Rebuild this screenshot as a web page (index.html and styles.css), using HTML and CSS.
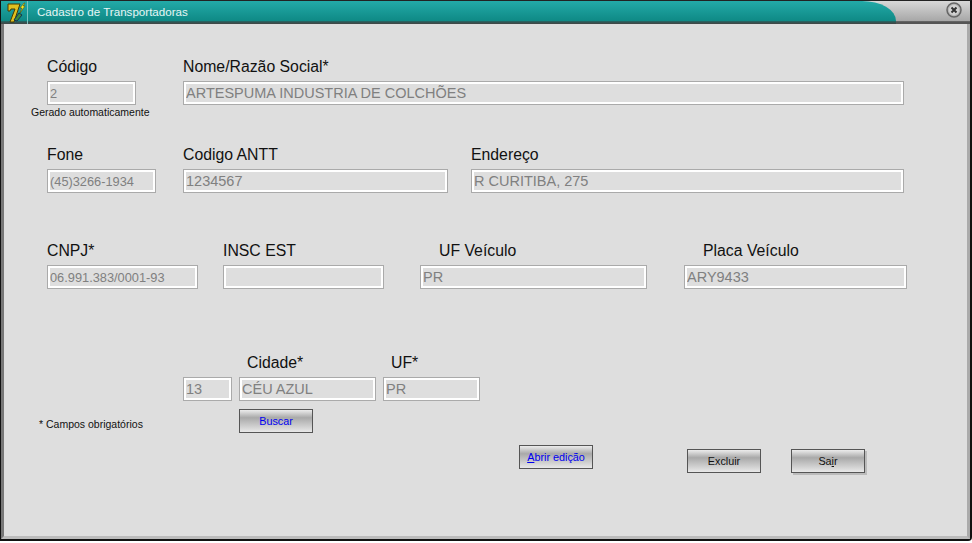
FILE: index.html
```html
<!DOCTYPE html>
<html lang="en">

<head>
    <meta charset="UTF-8">
    <meta name="viewport" content="width=device-width, initial-scale=1.0">
    <title>Cadastro de Transportadoras</title>
    <link rel="stylesheet" href="styles.css">
</head>

<body>
    <div class="window">
        <div class="titlebar">
            <div class="title-tab">
                <div class="app-icon">
                    <svg width="26" height="22" viewBox="0 0 26 22">
                        <path d="M7 3h12l-1 3-5 15H9l5-13h-4l-1 2H7z" fill="#e0c020" stroke="#4a3a00" stroke-width="1"/>
                        <path d="M13 19l5-7 3 2-5 6z" fill="#3c8a3c" stroke="#123456"/>
                        <path d="M23 2l-4 5h2l-2 5 5-7h-2l2-3z" fill="#f4e820" stroke="#554400" stroke-width=".5"/>
                    </svg>
                </div>
                <span class="title-text">Cadastro de Transportadoras</span>
            </div>
            <div class="close-btn">
                <svg width="16" height="16" viewBox="0 0 16 16">
                    <circle cx="8" cy="8" r="7" fill="#b8b8b8" stroke="#666" stroke-width="1.5"/>
                    <circle cx="8" cy="8" r="5" fill="#d4d4d4"/>
                    <path d="M5.5 5.5l5 5M10.5 5.5l-5 5" stroke="#333" stroke-width="2"/>
                </svg>
            </div>
        </div>

        <form class="content">
            <div class="row row-1">
                <div class="field w-codigo">
                    <label>Código</label>
                    <input type="text" value="2" class="small" disabled>
                    <span class="hint hint-auto">Gerado automaticamente</span>
                </div>
                <div class="field w-nome">
                    <label>Nome/Razão Social*</label>
                    <input type="text" value="ARTESPUMA INDUSTRIA DE COLCHÕES" disabled>
                </div>
            </div>

            <div class="row row-2">
                <div class="field w-fone">
                    <label>Fone</label>
                    <input type="text" value="(45)3266-1934" class="small" disabled>
                </div>
                <div class="field w-antt">
                    <label>Codigo ANTT</label>
                    <input type="text" value="1234567" disabled>
                </div>
                <div class="field w-endereco">
                    <label>Endereço</label>
                    <input type="text" value="R CURITIBA, 275" disabled>
                </div>
            </div>

            <div class="row row-3">
                <div class="field w-cnpj">
                    <label>CNPJ*</label>
                    <input type="text" value="06.991.383/0001-93" class="small" disabled>
                </div>
                <div class="field w-insc">
                    <label>INSC EST</label>
                    <input type="text" value="" disabled>
                </div>
                <div class="field w-ufv">
                    <label class="indent">UF Veículo</label>
                    <input type="text" value="PR" disabled>
                </div>
                <div class="field w-placa">
                    <label class="indent">Placa Veículo</label>
                    <input type="text" value="ARY9433" disabled>
                </div>
            </div>

            <div class="row row-4">
                <div class="field w-cod">
                    <input type="text" value="13" disabled>
                </div>
                <div class="field w-cidade">
                    <label class="indent-s">Cidade*</label>
                    <input type="text" value="CÉU AZUL" disabled>
                </div>
                <div class="field w-uf">
                    <label class="indent-s">UF*</label>
                    <input type="text" value="PR" disabled>
                </div>
            </div>

            <div class="row-search">
                <span class="hint hint-req">* Campos obrigatórios</span>
                <button type="button" class="btn btn-blue">Buscar</button>
            </div>

            <div class="row-actions">
                <button type="button" class="btn btn-blue btn-edit"><u>A</u>brir edição</button>
                <button type="button" class="btn btn-delete">Excluir</button>
                <button type="button" class="btn btn-exit">Sa<u>i</u>r</button>
            </div>
        </form>
    </div>
</body>

</html>
```

FILE: styles.css
```css
* {
    margin: 0;
    padding: 0;
    box-sizing: border-box;
    font-family: 'Liberation Sans', Arial, sans-serif;
}

body {
    width: 972px;
    height: 543px;
    overflow: hidden;
    background-color: #fff;
}

.window {
    width: 972px;
    height: 541px;
    display: flex;
    flex-direction: column;
    background-color: #dedede;
    border: 1px solid #111;
    border-top-color: #222;
    border-bottom-width: 2px;
    border-right-width: 2px;
    border-bottom-right-radius: 4px;
}

.titlebar {
    height: 23px;
    display: flex;
    justify-content: space-between;
    background: linear-gradient(#d8d8d8, #a8a8a8 85%, #555 90%, #555);
}

.title-tab {
    width: 895px;
    display: flex;
    align-items: center;
    background: linear-gradient(#23aaa8, #0f8a86 85%, #2c5a58 90%, #444);
    border-top-right-radius: 34px 20px;
}

.app-icon {
    width: 27px;
    height: 100%;
    border-right: 1px solid #7cc4c0;
}

.title-text {
    margin-left: 9px;
    margin-top: -2px;
    font-size: 11.6px;
    color: #e6f6f5;
}

.close-btn {
    padding: 1px 8px 0 0;
}

.content {
    flex: 1;
    padding-left: 43px;
    border-left: 3px solid #777;
    border-right: 3px solid #aaa;
    border-bottom: 3px solid #bbb;
}

.row {
    display: flex;
}

.field {
    display: flex;
    flex-direction: column;
}

label {
    display: block;
    height: 23px;
    font-size: 15.8px;
    line-height: 18px;
    color: #111;
}

.indent {
    padding-left: 19px;
}

.indent-s {
    padding-left: 8px;
}

input {
    width: 100%;
    height: 24px;
    padding: 0 2px;
    font-size: 14.5px;
    color: #808080;
    background-color: #dedede;
    border: 1px solid #aaa;
    outline: 2px solid #fff;
    outline-offset: -3px;
}

input.small {
    font-size: 12.8px;
}

.hint {
    font-size: 10.5px;
    color: #111;
}

.hint-auto {
    margin: 1px 0 0 -16px;
    white-space: nowrap;
}

.row-1 {
    margin-top: 34px;
}

.row-2 {
    margin-top: 28px;
}

.row-3 {
    margin-top: 49px;
}

.row-4 {
    margin-top: 65px;
    padding-left: 136px;
}

.w-codigo {
    width: 89px;
    margin-right: 47px;
}

.w-nome {
    width: 721px;
}

.w-fone {
    width: 109px;
    margin-right: 27px;
}

.w-antt {
    width: 265px;
    margin-right: 23px;
}

.w-endereco {
    width: 433px;
}

.w-cnpj {
    width: 151px;
    margin-right: 25px;
}

.w-insc {
    width: 161px;
    margin-right: 36px;
}

.w-ufv {
    width: 227px;
    margin-right: 37px;
}

.w-placa {
    width: 223px;
}

.w-cod {
    width: 49px;
    margin-right: 7px;
    justify-content: flex-end;
}

.w-cidade {
    width: 137px;
    margin-right: 7px;
}

.w-uf {
    width: 97px;
}

.row-search {
    display: flex;
    align-items: flex-end;
    margin-top: 8px;
}

.hint-req {
    width: 200px;
    margin-left: -8px;
    margin-bottom: 3px;
}

.btn {
    width: 74px;
    height: 24px;
    font-size: 10.8px;
    color: #111;
    background: linear-gradient(#ececec, #a9a9a9 35%, #e8e8e8);
    border: 1px solid #555;
}

.btn-blue {
    color: #0000f0;
}

.row-actions {
    display: flex;
    align-items: flex-start;
    margin-top: 12px;
    padding-left: 472px;
}

.btn-delete {
    margin: 4px 0 0 94px;
}

.btn-exit {
    margin: 4px 0 0 30px;
    box-shadow: 2px 2px 0 #bbb;
}
```
